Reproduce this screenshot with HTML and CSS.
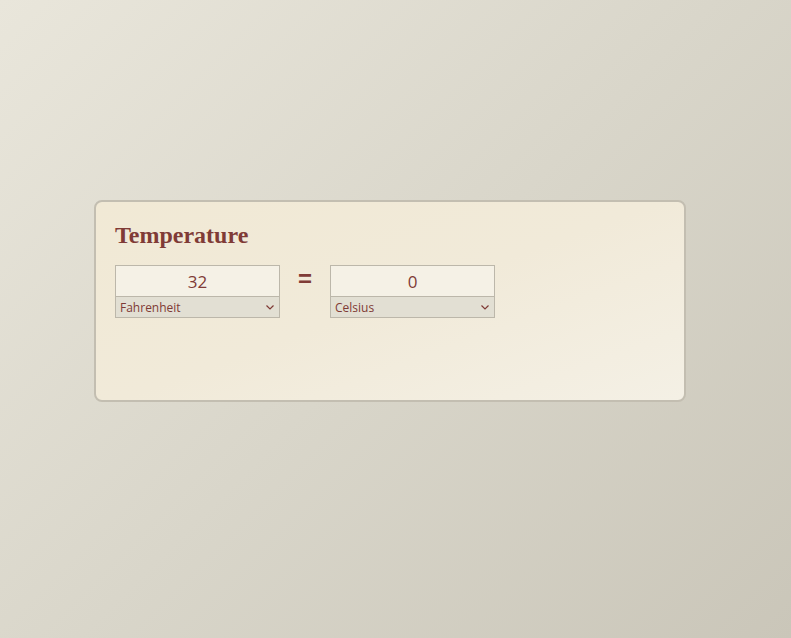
FILE: index.html
```html
<!DOCTYPE html>
<html>
<head>
<meta charset="utf-8">
<link rel="stylesheet" href="styles.css">
</head>
<body>
<main class="page">
  <section class="card">
    <h1 class="title">Temperature</h1>
    <div class="row">
      <div class="unit-box">
        <div class="value">32</div>
        <div class="select"><span>Fahrenheit</span><svg class="chev" width="8" height="5" viewBox="0 0 8 5"><path d="M0.5 0.5 L4 4 L7.5 0.5" fill="none" stroke="#7f3a35" stroke-width="1.2"/></svg></div>
      </div>
      <div class="equals">=</div>
      <div class="unit-box">
        <div class="value">0</div>
        <div class="select"><span>Celsius</span><svg class="chev" width="8" height="5" viewBox="0 0 8 5"><path d="M0.5 0.5 L4 4 L7.5 0.5" fill="none" stroke="#7f3a35" stroke-width="1.2"/></svg></div>
      </div>
    </div>
  </section>
</main>
</body>
</html>
```
FILE: styles.css
```css
* { box-sizing: border-box; }
html, body {
  margin: 0;
  height: 100%;
}
body {
  background: linear-gradient(135deg, #e9e6db 0%, #d9d6ca 50%, #cac6b9 100%);
  font-family: "Liberation Sans", Arial, sans-serif;
  color: #7f3a35;
}
.page {
  padding: 200px 0 0 94px;
}
.card {
  width: 592px;
  height: 202px;
  border: 2px solid #c3beb1;
  border-radius: 8px;
  background: linear-gradient(160deg, #f1e9d5 0%, #f1ead9 50%, #f4f0e5 100%);
  padding: 0 19px;
}
.title {
  font-family: "Liberation Serif", "Times New Roman", serif;
  font-weight: bold;
  font-size: 24px;
  margin: 19px 0 0 0;
  line-height: 28px;
  color: #803b36;
}
.row {
  display: flex;
  align-items: flex-start;
  margin-top: 16px;
}
.unit-box {
  width: 165px;
  border: 1px solid #bcb7aa;
}
.value {
  height: 31px;
  background: #f5f1e6;
  border-bottom: 1px solid #bcb7aa;
  text-align: center;
  font-family: "Open Sans", "Liberation Sans", sans-serif;
  font-size: 17px;
  line-height: 32px;
  color: #803b36;
}
.select {
  height: 20px;
  background: #e2dfd3;
  display: flex;
  align-items: center;
  justify-content: space-between;
  padding: 0 5px 0 4px;
  font-family: "Open Sans", "Liberation Sans", sans-serif;
  font-size: 12px;
  color: #7f3a35;
}
.chev { display: block; }
.equals {
  width: 50px;
  text-align: center;
  font-family: "Liberation Sans", Arial, sans-serif;
  font-weight: bold;
  font-size: 24px;
  line-height: 28px;
  color: #803b36;
}
```
